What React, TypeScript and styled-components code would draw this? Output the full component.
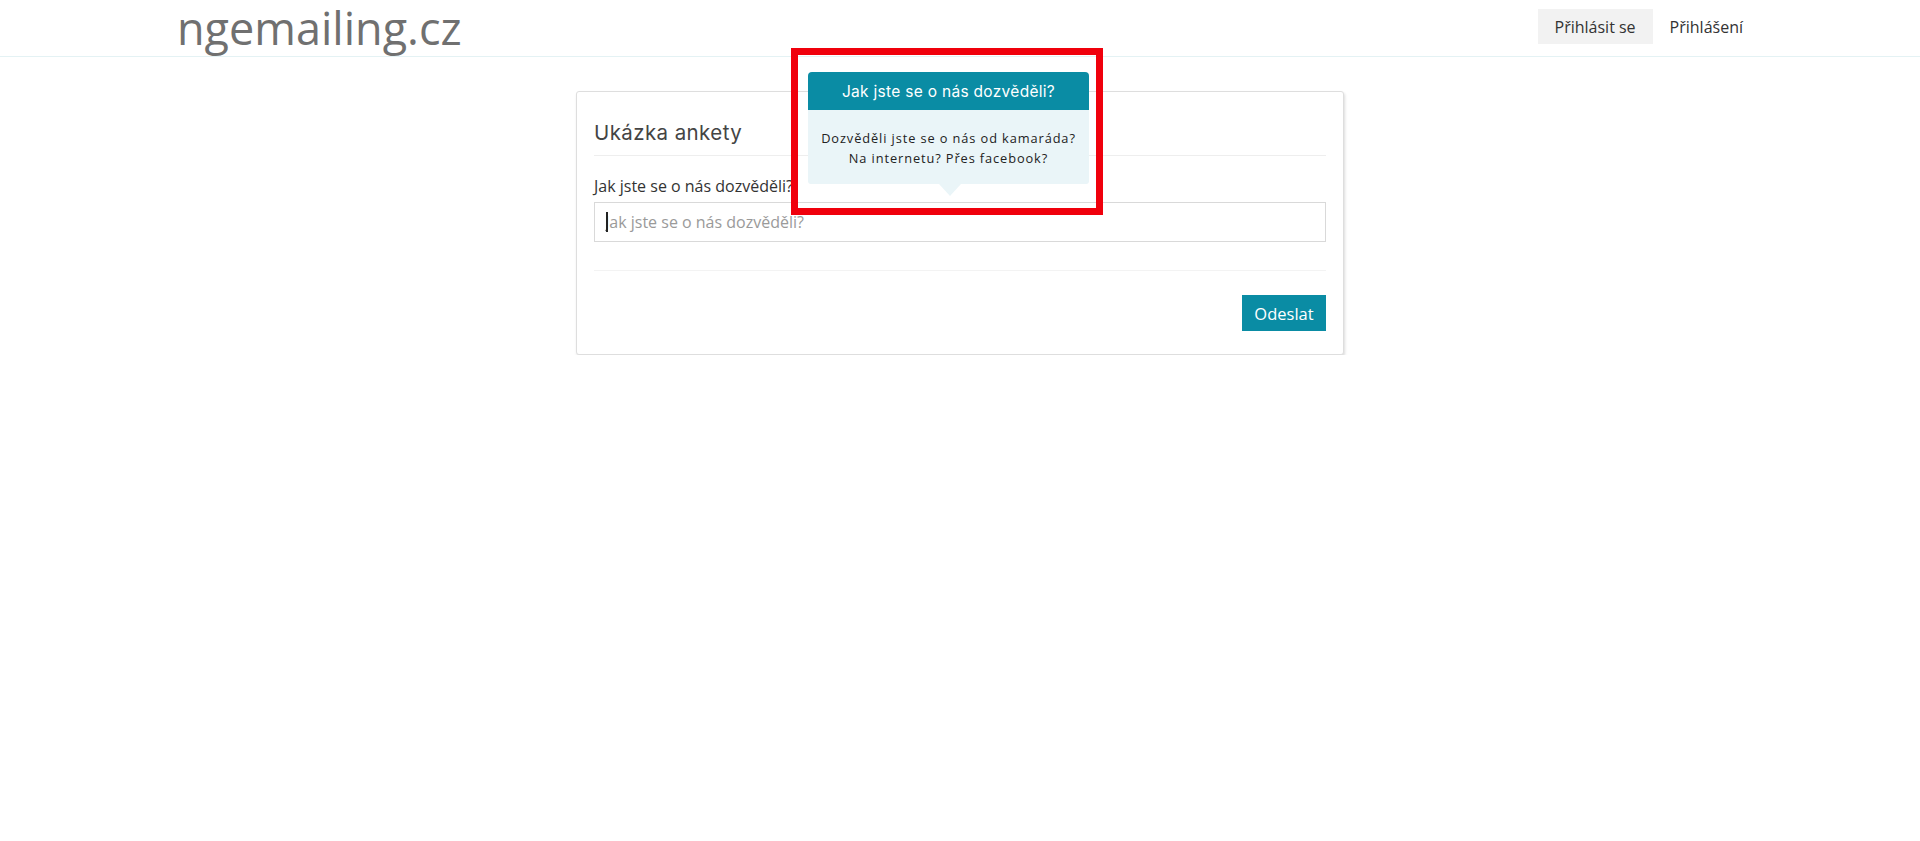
import React from "react";
import styled, { createGlobalStyle } from "styled-components";

const Global = createGlobalStyle`
  html, body { margin: 0; padding: 0; background: #fff; }
  body { font-family: "Open Sans", "Liberation Sans", sans-serif; color: #333; }
  * { box-sizing: border-box; }
`;

const Header = styled.header`
  height: 57px;
  border-bottom: 1px solid #e4f2f4;
  display: flex;
  align-items: flex-start;
  justify-content: space-between;
  padding: 0 160px 0 177px;
`;

const Brand = styled.a`
  font-family: "Open Sans", sans-serif;
  font-size: 45px;
  line-height: 56px;
  height: 56px;
  color: #707070;
  text-decoration: none;
`;

const Nav = styled.nav`
  display: flex;
  margin-top: 9px;
`;

const NavLink = styled.a<{ $active?: boolean }>`
  display: flex;
  align-items: center;
  height: 35px;
  padding: 0 17px;
  font-size: 16px;
  color: #333;
  background: ${(p) => (p.$active ? "#f2f2f2" : "transparent")};
  text-decoration: none;
`;

const Main = styled.main`
  display: flex;
  justify-content: center;
  padding-top: 34px;
`;

const Card = styled.section`
  position: relative;
  width: 768px;
  border: 1px solid #dedede;
  border-radius: 3px;
  box-shadow: 1px 2px 3px rgba(0, 0, 0, 0.14);
  padding: 0 17px 23px;
  background: #fff;
`;

const Title = styled.h2`
  margin: 0;
  padding: 27px 0 8px;
  font-family: Inter, "Noto Sans", sans-serif;
  font-weight: 400;
  font-size: 20.5px;
  line-height: 28px;
  letter-spacing: 0.4px;
  color: #444;
  border-bottom: 1px solid #eeeeee;
`;

const Label = styled.label`
  display: block;
  margin-top: 19px;
  font-size: 16px;
  line-height: 22px;
  color: #333;
`;

const InputWrap = styled.div`
  position: relative;
  margin-top: 5px;
`;

const Input = styled.input`
  display: block;
  width: 100%;
  height: 40px;
  border: 1px solid #d9d9d9;
  border-radius: 0;
  padding: 0 10px;
  font-family: "Open Sans", sans-serif;
  font-size: 16px;
  color: #333;
  outline: none;
  &::placeholder { color: #9a9a9a; }
`;

const Caret = styled.span`
  position: absolute;
  left: 12px;
  top: 10px;
  width: 2px;
  height: 20px;
  background: #222;
`;

const Divider = styled.hr`
  margin: 28px 0 0;
  border: 0;
  border-top: 1px solid #f3f3f3;
`;

const Actions = styled.div`
  display: flex;
  justify-content: flex-end;
  margin-top: 24px;
`;

const Button = styled.button`
  height: 36px;
  width: 84px;
  padding: 0;
  border: 0;
  background: #0a8ca4;
  color: #fff;
  font-family: "Open Sans", sans-serif;
  font-size: 16.5px;
`;

const Tooltip = styled.div`
  position: absolute;
  left: 231px;
  top: -20px;
  width: 281px;
`;

const TipHead = styled.div`
  height: 38px;
  display: flex;
  align-items: center;
  justify-content: center;
  background: #0a8ca4;
  border-radius: 4px 4px 0 0;
  color: #fff;
  font-family: Inter, "Noto Sans", sans-serif;
  font-size: 15.5px;
  letter-spacing: 0.3px;
`;

const TipBody = styled.div`
  position: relative;
  background: #eaf5f8;
  border-radius: 0 0 3px 3px;
  padding: 18px 4px 16px;
  text-align: center;
  font-size: 12.8px;
  line-height: 20px;
  letter-spacing: 0.9px;
  color: #222;
  &::after {
    content: "";
    position: absolute;
    left: 50%;
    bottom: -12px;
    margin-left: -10px;
    border-left: 11px solid transparent;
    border-right: 11px solid transparent;
    border-top: 12px solid #eaf5f8;
  }
`;

const Highlight = styled.div`
  position: absolute;
  left: 214px;
  top: -44px;
  width: 312px;
  height: 167px;
  border: 7px solid #f0000c;
  pointer-events: none;
`;

export default function App() {
  return (
    <>
      <Global />
      <Header>
        <Brand href="#">ngemailing.cz</Brand>
        <Nav>
          <NavLink href="#" $active>Přihlásit se</NavLink>
          <NavLink href="#">Přihlášení</NavLink>
        </Nav>
      </Header>
      <Main>
        <Card>
          <Title>Ukázka ankety</Title>
          <Label htmlFor="q">Jak jste se o nás dozvěděli?</Label>
          <InputWrap>
            <Input id="q" placeholder="Jak jste se o nás dozvěděli?" />
            <Caret />
          </InputWrap>
          <Divider />
          <Actions>
            <Button>Odeslat</Button>
          </Actions>
          <Tooltip>
            <TipHead>Jak jste se o nás dozvěděli?</TipHead>
            <TipBody>
              Dozvěděli jste se o nás od kamaráda?
              <br />
              Na internetu? Přes facebook?
            </TipBody>
          </Tooltip>
          <Highlight />
        </Card>
      </Main>
    </>
  );
}
